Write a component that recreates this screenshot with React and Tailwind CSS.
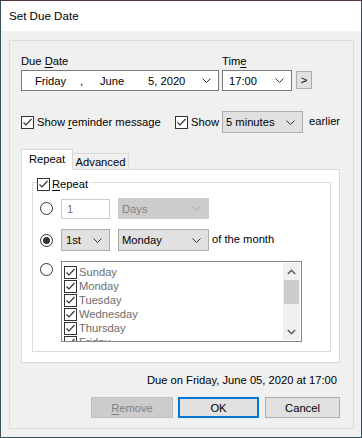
import React from "react";

const Chevron = ({ color = "#333" }) => (
  <svg width="9" height="5" viewBox="0 0 9 5" className="shrink-0">
    <polyline points="0.5,0.5 4.5,4.5 8.5,0.5" fill="none" stroke={color} strokeWidth="1" />
  </svg>
);

const Check = ({ className = "" }) => (
  <span className={"w-[13px] h-[13px] border border-[#333] bg-white flex items-center justify-center shrink-0 " + className}>
    <svg width="11" height="11" viewBox="0 0 11 11">
      <polyline points="1.5,5.5 4,8 9.5,2" fill="none" stroke="#333" strokeWidth="1.2" />
    </svg>
  </span>
);

const Radio = ({ on }) => (
  <span className="w-[13px] h-[13px] rounded-full border border-[#333] bg-white flex items-center justify-center shrink-0">
    {on && <span className="w-[7px] h-[7px] rounded-full bg-[#333]" />}
  </span>
);

const Combo = ({ w, text, disabled }) => (
  <div
    className={
      "h-[21px] flex items-center justify-between pl-[3px] pr-[7px] border " +
      (disabled ? "bg-[#cccccc] border-[#cccccc] text-[#838383]" : "bg-[#e1e1e1] border-[#adadad] text-black") +
      " " + w
    }
  >
    <span>{text}</span>
    <Chevron color={disabled ? "#a0a0a0" : "#333"} />
  </div>
);

const days = ["Sunday", "Monday", "Tuesday", "Wednesday", "Thursday", "Friday", "Saturday"];

export default function App() {
  return (
    <div
      className="w-[362px] h-[438px] bg-[#f0f0f0] border border-[#3b5059] border-t-[#5b3438] flex flex-col text-[11.2px] leading-[16px] text-black overflow-hidden"
      style={{ fontFamily: '"Segoe UI", "Liberation Sans", Arial, sans-serif' }}
    >
      <div className="h-[30px] bg-white flex items-center pl-[8px] text-[11.6px] shrink-0">Set Due Date</div>

      <div className="ml-[8px] mt-[9px] w-[345px] h-[389px] border border-[#dcdcdc] pl-[11px] pt-[12px] flex flex-col">
        {/* Row 1 */}
        <div className="flex">
          <div className="flex flex-col w-[201px]">
            <div className="h-[16px] mb-[1px]">Due <u className="underline-offset-2">D</u>ate</div>
            <div className="w-[198px] h-[21px] bg-white border border-[#7a7a7a] flex items-center pl-[13px] pr-[7px]">
              <span className="w-[45px]">Friday</span>
              <span className="w-[20px]">,</span>
              <span className="w-[48px]">June</span>
              <span className="flex-1">5, 2020</span>
              <Chevron />
            </div>
          </div>
          <div className="flex flex-col">
            <div className="h-[16px] mb-[1px]">Tim<u className="underline-offset-2">e</u></div>
            <div className="flex items-start">
              <div className="w-[70px] h-[21px] bg-white border border-[#7a7a7a] flex items-center justify-between pl-[6px] pr-[7px]">
                <span>17:00</span>
                <Chevron />
              </div>
              <div className="ml-[4px] mt-[1px] w-[16px] h-[18px] bg-[#e1e1e1] border border-[#adadad] flex items-center justify-center">&gt;</div>
            </div>
          </div>
        </div>

        {/* Row 2 */}
        <div className="flex items-center mt-[20px] h-[22px]">
          <div className="w-[154px] flex items-center">
            <Check />
            <span className="ml-[3px]">Show <u className="underline-offset-2">r</u>eminder message</span>
          </div>
          <div className="w-[47px] flex items-center">
            <Check />
            <span className="ml-[3px]">Show</span>
          </div>
          <div className="w-[81px] h-[22px] bg-[#e1e1e1] border border-[#adadad] flex items-center justify-between pl-[3px] pr-[7px]">
            <span>5 minutes</span>
            <Chevron />
          </div>
          <span className="ml-[6px] -mt-[2px]">earlier</span>
        </div>

        {/* Tabs */}
        <div className="mt-[16px] flex items-end h-[20px]">
          <div className="relative z-10 -mb-px w-[52px] h-[21px] bg-white border-t border-l border-r border-[#d9d9d9] flex items-start justify-center pt-[1px]">
            Repeat
          </div>
          <div className="w-[56px] h-[16px] border-t border-r border-[#d9d9d9] flex items-center justify-center">
            Advanced
          </div>
        </div>
        <div className="w-[319px] h-[194px] bg-white border border-[#d9d9d9] pl-[10px] pt-[12px]">
          <div className="relative w-[299px] h-[170px] border border-[#dcdcdc] pl-[7px] pt-[15px]">
            <div className="absolute -top-[7px] left-[4px] bg-white flex items-center pr-[2px]">
              <Check />
              <span className="ml-[2px]"><u className="underline-offset-2">R</u>epeat</span>
            </div>

            {/* radio row 1 */}
            <div className="flex items-center h-[21px]">
              <Radio />
              <div className="ml-[8px] w-[49px] h-[20px] border border-[#cccccc] bg-white text-[#6d6d6d] pl-[5px] flex items-center">1</div>
              <div className="ml-[8px]">
                <Combo w="w-[91px]" text="Days" disabled />
              </div>
            </div>

            {/* radio row 2 */}
            <div className="flex items-center h-[22px] mt-[10px]">
              <Radio on />
              <div className="ml-[8px]">
                <div className="h-[22px] w-[49px] flex items-center justify-between pl-[4px] pr-[7px] border bg-[#e1e1e1] border-[#adadad]">
                  <span>1st</span>
                  <Chevron />
                </div>
              </div>
              <div className="ml-[8px]">
                <div className="h-[22px] w-[91px] flex items-center justify-between pl-[3px] pr-[7px] border bg-[#e1e1e1] border-[#adadad]">
                  <span>Monday</span>
                  <Chevron />
                </div>
              </div>
              <span className="ml-[3px] -mt-[2px]">of the month</span>
            </div>

            {/* radio row 3 */}
            <div className="flex items-start mt-[10px]">
              <div className="mt-[2px]"><Radio /></div>
              <div className="ml-[8px] w-[241px] h-[81px] border border-[#828790] bg-white flex overflow-hidden">
                <div className="flex-1 pl-[2px] overflow-hidden">
                  {days.map((d, i) => (
                    <div key={d} className={"flex items-center text-[#6d6d6d] " + (i === 0 ? "h-[17px] pt-[3px]" : "h-[14px]")}>
                      <Check />
                      <span className="ml-[2px]">{d}</span>
                    </div>
                  ))}
                </div>
                <div className="w-[17px] mt-[1px] mb-[1px] mr-[1px] bg-[#f0f0f0] flex flex-col items-center">
                  <div className="h-[17px] flex items-center justify-center">
                    <svg width="9" height="6" viewBox="0 0 9 6">
                      <polyline points="0.8,5 4.5,1.3 8.2,5" fill="none" stroke="#606060" strokeWidth="1.6" />
                    </svg>
                  </div>
                  <div className="w-[15px] h-[24px] bg-[#cdcdcd]" />
                  <div className="flex-1" />
                  <div className="h-[17px] flex items-center justify-center">
                    <svg width="9" height="6" viewBox="0 0 9 6">
                      <polyline points="0.8,1 4.5,4.7 8.2,1" fill="none" stroke="#606060" strokeWidth="1.6" />
                    </svg>
                  </div>
                </div>
              </div>
            </div>
          </div>
        </div>

        {/* Due on */}
        <div className="w-[319px] mt-[9px] text-right pr-[3px] h-[16px]">Due on Friday, June 05, 2020 at 17:00</div>

        {/* Buttons */}
        <div className="w-[319px] mt-[9px] flex justify-end">
          <div className="w-[82px] h-[21px] bg-[#cccccc] border border-[#bfbfbf] text-[#838383] flex items-center justify-center">
            <span><u className="underline-offset-2">R</u>emove</span>
          </div>
          <div className="ml-[5px] w-[81px] h-[21px] bg-[#e1e1e1] border-2 border-[#0078d7] flex items-center justify-center">OK</div>
          <div className="ml-[6px] w-[75px] h-[21px] bg-[#e1e1e1] border border-[#adadad] flex items-center justify-center">Cancel</div>
        </div>
      </div>
    </div>
  );
}
